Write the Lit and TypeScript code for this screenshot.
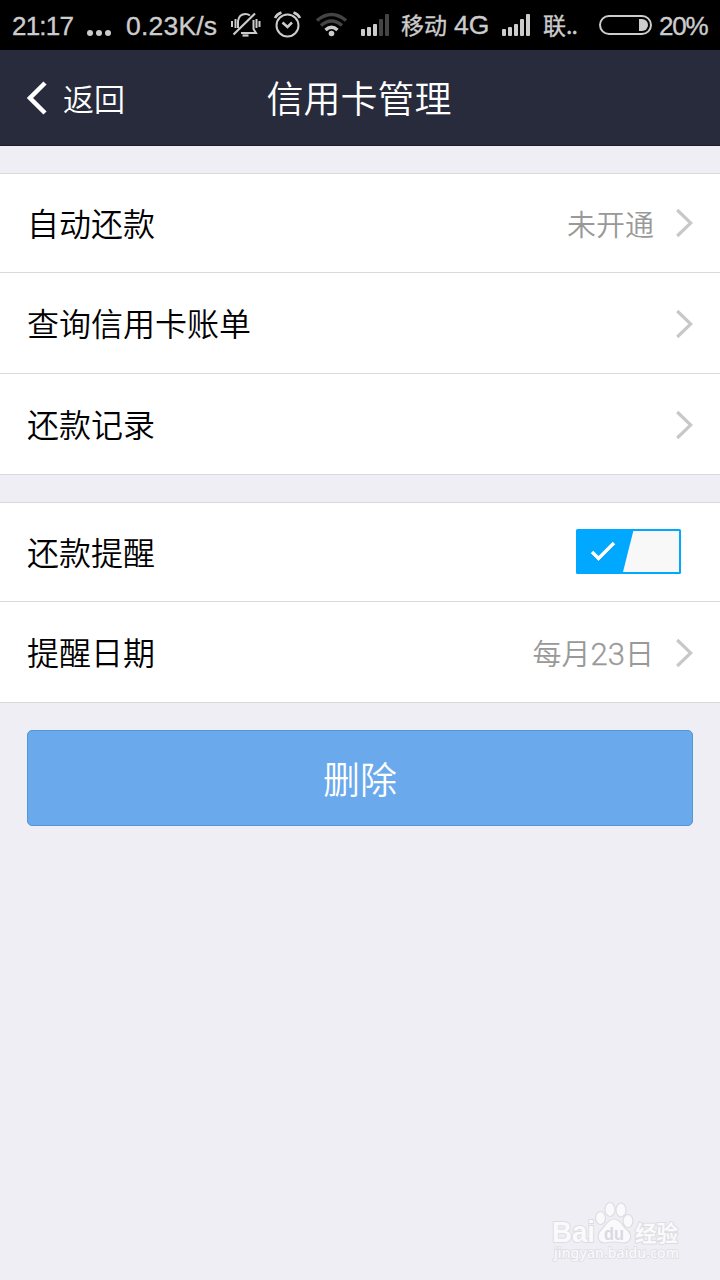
import { LitElement, html, svg, css, nothing } from "lit";
import { customElement, property } from "lit/decorators.js";

@customElement("status-bar")
class StatusBar extends LitElement {
  static styles = css`
    :host {
      display: grid;
      grid-template-columns: 75px 39px 117px 43px 42px 44px 41px 100px 42px 56px 60px 61px;
      height: 50px;
      background: #000;
      color: #ccc;
      font: 26px/52px "Liberation Sans", "Noto Sans CJK SC", sans-serif;
      white-space: nowrap;
      overflow: hidden;
      -webkit-text-stroke: 0.35px #ccc;
    }
    svg { display: block; width: 100%; height: 50px; overflow: visible; }
    .time { padding-left: 12px; letter-spacing: -0.8px; }
    .speed { padding-left: 12px; font-size: 26.5px; letter-spacing: 0.2px; }
    .cn { font-family: "Noto Sans CJK SC", sans-serif; font-size: 23px; line-height: 49px; }
    .g { font-family: "Liberation Sans", sans-serif; font-size: 26.5px; margin-left: 7px; }
    .dots { letter-spacing: -1px; }
    .pct { font-size: 26px; letter-spacing: -1.2px; }
  `;

  private signal(strength: number) {
    const bars = [
      [1, 29, 7], [7, 27, 9], [13, 24, 12], [19, 19, 17], [25, 14, 22],
    ];
    return html`<svg viewBox="0 0 41 50" preserveAspectRatio="xMinYMin">
      ${bars.map(([x, y, h], i) => svg`<rect x=${x} y=${y} width="4" height=${h} rx="1" fill=${i < strength ? "#ccc" : "#444"}></rect>`)}
    </svg>`;
  }

  render() {
    return html`
      <span class="time">21:17</span>
      <svg viewBox="0 0 39 50" fill="#ccc"><circle cx="15" cy="33" r="3"/><circle cx="24" cy="33" r="3"/><circle cx="33" cy="33" r="3"/></svg>
      <span class="speed">0.23K/s</span>
      <svg viewBox="0 0 43 50" fill="none" stroke="#ccc" stroke-width="2">
        <path d="M1 21v6M4.500 19v9M25.500 19v9M28.500 21v6"/>
        <path d="M7 28V21Q8 14 14.500 14Q17 14 19 15.500M22.500 20V29L25 33H10"/>
        <path d="M2.500 34.500L24 13.500" stroke-width="2.200"/>
        <path d="M11.500 35.500h6" stroke-width="2.200"/>
      </svg>
      <svg viewBox="0 0 42 50" fill="none" stroke="#ccc" stroke-width="2">
        <circle cx="13.500" cy="25.500" r="11"/>
        <path d="M8.500 22.500L13.500 27L18 22.500" stroke-width="2.500"/>
        <path d="M1 18Q3 14 7.500 12.500M19.500 12.500Q24 14 26 18" stroke-width="2.500"/>
      </svg>
      <svg viewBox="0 0 44 50" fill="none" stroke-width="3.500">
        <path d="M1 20.500Q15.500 8.500 30 20.500M5 25.500Q15.500 16.500 26 25.500" stroke="#444"/>
        <path d="M9.500 30Q15.500 24.500 21.500 30" stroke="#ccc"/>
        <circle cx="15.500" cy="33.500" r="2.800" fill="#ccc"/>
      </svg>
      ${this.signal(3)}
      <span class="cn">移动<span class="g">4G</span></span>
      ${this.signal(5)}
      <span class="cn">联<span class="dots">..</span></span>
      <svg viewBox="0 0 60 50">
        <rect x="1" y="16" width="51" height="18" rx="9" fill="none" stroke="#ccc" stroke-width="2"/>
        <path d="M40 19h3a6 6 0 0 1 0 12h-3z" fill="#ccc"/>
      </svg>
      <span class="pct">20%</span>
    `;
  }
}

@customElement("setting-row")
class SettingRow extends LitElement {
  @property() label = "";
  @property() value = "";
  @property({ type: Boolean }) toggle = false;

  static styles = css`
    :host {
      display: flex;
      align-items: center;
      box-sizing: border-box;
      height: 101px;
      padding: 0 27px;
      background: #fff;
      border-bottom: 1px solid #d9d9dc;
      font-family: "Noto Sans CJK SC", sans-serif;
      color: #000;
    }
    .label { flex: 1; font-size: 32px; line-height: 48px; font-weight: 350; padding-bottom: 2px; }
    .value { font-size: 29px; line-height: 44px; font-weight: 350; color: #999; margin-right: 22px; }
    .dated { padding-top: 2px; }
    .num { font-family: Roboto, sans-serif; font-weight: 300; font-size: 31px; -webkit-text-stroke: 0.3px #999; }
    .arrow { display: block; width: 17px; height: 30px; padding-top: 1px; }
    :host(.short) .arrow { padding-top: 0; }
    .toggle { display: block; width: 105px; height: 45px; margin: 0 12px 2px 0; }
  `;

  render() {
    return html`
      <span class="label">${this.label}</span>
      ${this.value
        ? html`<span class="value ${/\d/.test(this.value) ? "dated" : ""}">${this.value.split(/(\d+)/).map((p) =>
            /\d/.test(p) ? html`<span class="num">${p}</span>` : p)}</span>`
        : nothing}
      ${this.toggle
        ? html`<svg class="toggle" viewBox="0 0 105 45">
            <rect width="105" height="45" rx="1.500" fill="#00a8ff"/>
            <path d="M57.300 2H103V43H47z" fill="#f8f8f8"/>
            <path d="M16 24L22.500 30.500L38 15" fill="none" stroke="#0878b4" stroke-opacity=".45" stroke-width="3.500"/>
            <path d="M16 23L22.500 29.500L38 14" fill="none" stroke="#fff" stroke-width="3.500"/>
          </svg>`
        : html`<svg class="arrow" viewBox="0 0 17 30">
            <path d="M1.200 2L14.800 15L1.200 28" fill="none" stroke="#c8c8c8" stroke-width="3.200"/>
          </svg>`}
    `;
  }
}

@customElement("app-root")
class AppRoot extends LitElement {
  static styles = css`
    :host {
      display: flex;
      flex-direction: column;
      width: 720px;
      height: 1280px;
      overflow: hidden;
      background: #efeef4;
      font-family: "Noto Sans CJK SC", sans-serif;
    }
    .header {
      display: grid;
      grid-template-columns: 180px 1fr 180px;
      align-items: center;
      box-sizing: border-box;
      height: 96px;
      background: #282b3c;
      border-bottom: 1px solid #1e1b2c;
      color: #fff;
    }
    .back { display: flex; align-items: center; padding-left: 27px; font-size: 31px; line-height: 46px; font-weight: 350; }
    .back svg { width: 20px; height: 34px; margin-right: 16px; }
    .title { text-align: center; font-size: 37px; line-height: 54px; font-weight: 350; padding: 0 2px 1px 0; }
    .group { margin-top: 27px; border-top: 1px solid #d9d9dc; }
    .short { height: 99px; }
    .delete {
      box-sizing: border-box;
      height: 96px;
      margin: 27px 27px 0;
      border: 1px solid #5296dc;
      border-radius: 5px;
      background: #69a9ec;
      color: #fff;
      font: 350 37px/94px "Noto Sans CJK SC", sans-serif;
      text-align: center;
      padding: 0;
    }
    .mark { display: block; width: 140px; height: 70px; margin: auto 34px 10px auto; }
    .mark text { paint-order: stroke; stroke: #dddde2; stroke-width: 2px; fill: #fafafc; }
    .mark .du { fill: #d9d9df; stroke: none; }
    .mark .site { stroke-width: 1.6px; }
  `;

  render() {
    return html`
      <status-bar></status-bar>
      <header class="header">
        <div class="back">
          <svg viewBox="0 0 20 34"><path d="M18 2L3 17L18 32" fill="none" stroke="#fff" stroke-width="4.500"/></svg>返回
        </div>
        <div class="title">信用卡管理</div>
      </header>
      <section class="group">
        <setting-row class="short" label="自动还款" value="未开通"></setting-row>
        <setting-row label="查询信用卡账单"></setting-row>
        <setting-row label="还款记录"></setting-row>
      </section>
      <section class="group">
        <setting-row class="short" label="还款提醒" toggle></setting-row>
        <setting-row label="提醒日期" value="每月23日"></setting-row>
      </section>
      <button class="delete">删除</button>
      <svg class="mark" viewBox="0 0 140 70">
        <text x="6" y="42" font-family="Liberation Sans, sans-serif" font-weight="700" font-size="29" textLength="43" lengthAdjust="spacingAndGlyphs">Bai</text>
        <g fill="#fafafc" stroke="#dddde2" stroke-width="1.200">
          <ellipse cx="54.500" cy="18" rx="5" ry="6.500"/>
          <ellipse cx="64" cy="9.500" rx="5" ry="7"/>
          <ellipse cx="75" cy="10" rx="5" ry="7"/>
          <ellipse cx="82" cy="21" rx="5" ry="6.500"/>
          <path d="M68 19C62 19 60 25 56 29C50 34 51 43 59 43Q68 41 77 43C86 43 87 34 80 29C76 25 74 19 68 19Z"/>
        </g>
        <text class="du" x="58" y="40" font-family="Liberation Sans, sans-serif" font-weight="700" font-size="18" textLength="20" lengthAdjust="spacingAndGlyphs">du</text>
        <text x="89" y="40.500" font-family="Noto Sans CJK SC, sans-serif" font-weight="700" font-size="21.500" textLength="43">经验</text>
        <text class="site" x="8" y="58" font-family="Noto Sans, sans-serif" font-size="14" font-weight="500" textLength="125">jingyan.baidu.com</text>
      </svg>
    `;
  }
}
